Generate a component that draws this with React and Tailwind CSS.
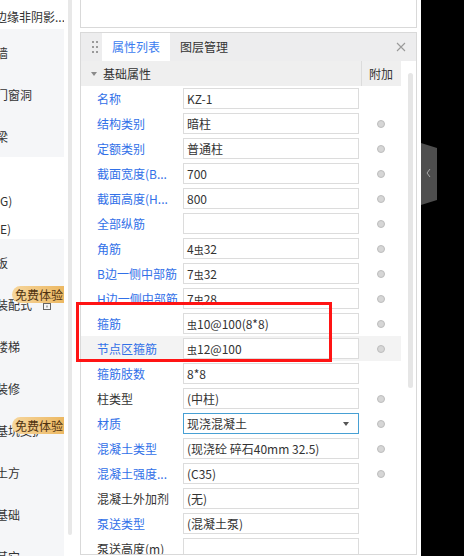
import React from "react";

const S = () => <span className="text-[10px] leading-none">虫</span>;

const rows = [
  { l: "名称", v: "KZ-1", b: true, c: false },
  { l: "结构类别", v: "暗柱", b: true, c: true },
  { l: "定额类别", v: "普通柱", b: true, c: true },
  { l: "截面宽度(B...", v: "700", b: true, c: true },
  { l: "截面高度(H...", v: "800", b: true, c: true },
  { l: "全部纵筋", v: "", b: true, c: true },
  { l: "角筋", v: <>4<S />32</>, b: true, c: true },
  { l: "B边一侧中部筋", v: <>7<S />32</>, b: true, c: true },
  { l: "H边一侧中部筋", v: <>7<S />28</>, b: true, c: true },
  { l: "箍筋", v: <><S />10@100(8*8)</>, b: true, c: true },
  { l: "节点区箍筋", v: <><S />12@100</>, b: true, c: true, hl: true },
  { l: "箍筋肢数", v: "8*8", b: true, c: false },
  { l: "柱类型", v: "(中柱)", b: false, c: true },
  { l: "材质", v: "现浇混凝土", b: true, c: true, dd: true },
  { l: "混凝土类型", v: "(现浇砼 碎石40mm 32.5)", b: true, c: true },
  { l: "混凝土强度...", v: "(C35)", b: true, c: true },
  { l: "混凝土外加剂", v: "(无)", b: false, c: false },
  { l: "泵送类型", v: "(混凝土泵)", b: true, c: false },
  { l: "泵送高度(m)", v: "", b: false, c: false },
];

function Badge({ top }) {
  return (
    <div
      className="absolute right-0 h-[17px] w-[52px] rounded-l-full bg-gradient-to-r from-[#f6d69c] to-[#ecb862] flex items-center pl-[3px] text-[12px] leading-none text-[#4e3210]"
      style={{ top }}
    >
      免费体验
    </div>
  );
}

function SideItem({ text, h = 42, badge, lock }) {
  return (
    <div className="relative flex shrink-0 items-center overflow-hidden pt-[2px]" style={{ height: h }}>
      <span className="ml-[-4px] whitespace-nowrap text-[12px] text-[#333]">{text}</span>
      {lock && (
        <svg className="absolute left-[43px] top-[17px]" width="8" height="10" viewBox="0 0 8 10">
          <rect x="0.5" y="3.5" width="7" height="6" fill="none" stroke="#666" />
          <path d="M2 3.5V2a2 2 0 0 1 4 0v1.5" fill="none" stroke="#666" />
          <rect x="3.5" y="5.5" width="1" height="2" fill="#666" />
        </svg>
      )}
      {badge !== undefined && <Badge top={badge} />}
    </div>
  );
}

export default function App() {
  return (
    <div className="relative flex h-[556px] w-[464px] overflow-hidden bg-white font-['Noto_Sans_CJK_SC','Noto_Sans',sans-serif]">
      {/* Sidebar */}
      <div className="flex h-[556px] w-[64px] shrink-0 flex-col overflow-hidden">
        <div className="flex h-[29px] shrink-0 items-center overflow-hidden pt-[5px]">
          <span className="ml-[-5px] whitespace-nowrap text-[12px] text-[#333]">边缘非阴影...</span>
        </div>
        <div className="h-[128px] shrink-0 bg-[#f5f6f8] pt-[2px]">
          <SideItem text="墙" />
          <SideItem text="门窗洞" />
          <SideItem text="梁" />
        </div>
        <div className="h-[82px] shrink-0 overflow-hidden pt-[29px]">
          <SideItem text="(G)" h={28} />
          <SideItem text="(E)" h={27} />
        </div>
        <div className="shrink-0 bg-[#f5f6f8] pt-[2px]">
          <SideItem text="板" />
          <SideItem text="装配式" badge={3} lock />
          <SideItem text="楼梯" />
          <SideItem text="装修" />
          <SideItem text="基坑支护" badge={8} />
          <SideItem text="土方" />
          <SideItem text="基础" />
          <SideItem text="其它" />
        </div>
      </div>

      {/* sidebar scrollbar */}
      <div className="w-[16px] shrink-0">
        <div className="ml-[4px] h-[535px] w-[4px] rounded-b-[2px] bg-[#e8e8e8]" />
      </div>

      {/* Main */}
      <div className="flex w-[337px] shrink-0 flex-col">
        <div className="h-[28px] shrink-0 border-x border-b border-[#d9d9d9] bg-white" />
        <div className="mt-[4px] flex h-[523px] shrink-0 flex-col overflow-hidden border border-[#d9d9d9]">
          {/* tab header */}
          <div className="flex h-[28px] shrink-0 items-stretch bg-[#ededee]">
            <div className="flex w-[21px] items-center justify-end pr-[4px]">
              <div className="grid grid-cols-2 gap-x-[2px] gap-y-[3px]">
                {[0, 1, 2, 3, 4, 5].map((i) => (
                  <div key={i} className="h-[2px] w-[2px] bg-[#9a9a9a]" />
                ))}
              </div>
            </div>
            <div className="flex w-[68px] items-center bg-white pl-[10px] text-[12px] text-[#3b7cf0]">属性列表</div>
            <div className="flex items-center pl-[10px] text-[12px] text-[#333]">图层管理</div>
            <div className="ml-auto mr-[10px] flex items-center">
              <svg width="10" height="10" viewBox="0 0 10 10">
                <path d="M1 1L9 9M9 1L1 9" stroke="#9a9a9a" strokeWidth="1.1" />
              </svg>
            </div>
          </div>

          <div className="flex flex-1 overflow-hidden">
            <div className="w-[320px] shrink-0">
              {/* section header */}
              <div className="flex h-[25px] items-center bg-[#efefef]">
                <div className="flex w-[280px] items-center pl-[10px]">
                  <svg width="6" height="4" viewBox="0 0 6 4">
                    <path d="M0 0H6L3 4Z" fill="#8a8a8a" />
                  </svg>
                  <span className="ml-[6px] text-[12px] text-[#333]">基础属性</span>
                </div>
                <div className="flex h-full w-[40px] items-center border-l border-[#dcdcdc] pl-[7px] text-[12px] text-[#333]">
                  附加
                </div>
              </div>
              {rows.map((r, i) => (
                <div key={i} className={`flex h-[25px] items-center ${r.hl ? "bg-[#f3f3f3]" : "bg-white"}`}>
                  <div
                    className={`w-[100px] whitespace-nowrap pl-[16px] text-[12px] ${r.b ? "text-[#3170e8]" : "text-[#333]"}`}
                  >
                    {r.l}
                  </div>
                  <div className="w-[180px] px-[2px]">
                    <div
                      className={`flex h-[21px] items-center overflow-hidden whitespace-nowrap border bg-white px-[3px] text-[12px] text-[#333] ${
                        r.dd ? "border-[#47a0d4]" : "border-[#dcdcdc]"
                      }`}
                    >
                      <span className="flex-1">{r.v}</span>
                      {r.dd && (
                        <svg className="mr-[6px]" width="6" height="4" viewBox="0 0 6 4">
                          <path d="M0 0H6L3 4Z" fill="#555" />
                        </svg>
                      )}
                    </div>
                  </div>
                  <div className="flex w-[40px] justify-center">
                    {r.c && <div className="h-[8px] w-[8px] rounded-full border border-[#bdbdbd] bg-[#d6d6d6]" />}
                  </div>
                </div>
              ))}
            </div>
            <div className="w-[15px] shrink-0">
              <div className="ml-[7px] mt-[12px] h-[315px] w-[5px] rounded-full bg-[#e6e6e6]" />
            </div>
          </div>
        </div>
      </div>

      <div className="w-[4px] shrink-0" />

      {/* right black */}
      <div className="flex-1 bg-black pt-[143px]">
        <svg width="16" height="62" viewBox="0 0 16 62">
          <path d="M0 0L16 5V57L0 62Z" fill="#4e4e4e" />
          <path d="M9 26L6 30L9 34" fill="none" stroke="#a8a8a8" strokeWidth="1" />
        </svg>
      </div>

      {/* red highlight box */}
      <div className="absolute left-[76px] top-[302px] h-[60px] w-[256px] border-[3px] border-[#ff1414]" />
    </div>
  );
}
